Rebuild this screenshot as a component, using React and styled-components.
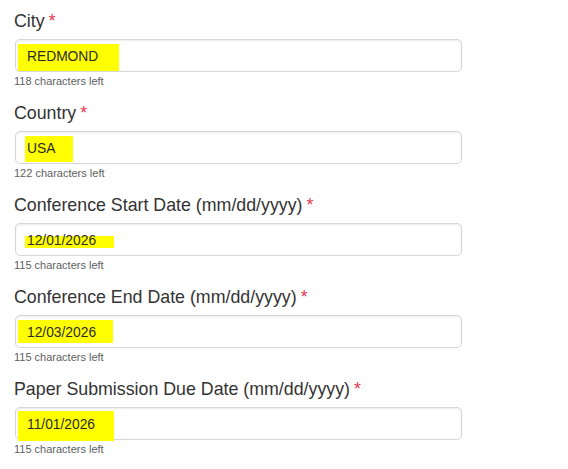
import React from 'react';
import styled, { createGlobalStyle } from 'styled-components';

const GlobalStyle = createGlobalStyle`
  html, body {
    margin: 0;
    padding: 0;
    background: #fff;
  }
  body {
    font-family: 'Liberation Sans', Arial, sans-serif;
    color: #333;
  }
`;

const Form = styled.div`
  padding: 11px 0 0 14px;
  width: 460px;
`;

const Group = styled.div`
  display: flex;
  flex-direction: column;
  margin-bottom: 15px;
`;

const Label = styled.label`
  font-size: 17.8px;
  line-height: 20px;
  color: #333;
  margin-bottom: 8px;
  white-space: nowrap;
`;

const Required = styled.span`
  color: #e63950;
  margin-left: 4px;
`;

const InputBox = styled.div`
  position: relative;
  box-sizing: border-box;
  margin-left: 1px;
  width: 447px;
  height: 33px;
  display: flex;
  align-items: center;
  padding: 0 11px;
  border: 1px solid #d6d6d6;
  border-radius: 5px;
  box-shadow: inset 0 1px 2px rgba(0, 0, 0, 0.08);
  background: #fff;
`;

const Mark = styled.span`
  position: absolute;
  left: ${({ $x }) => $x}px;
  top: ${({ $y }) => $y}px;
  width: ${({ $w }) => $w}px;
  height: ${({ $h }) => $h}px;
  background: #ffff00;
`;

const Value = styled.span`
  position: relative;
  font-size: 13.8px;
  line-height: 15px;
  color: #2b2b2b;
  margin-top: 2px;
`;

const Help = styled.div`
  font-size: 11px;
  line-height: 13px;
  color: #5e5e5e;
  margin-top: 3px;
`;

const fields = [
  { label: 'City', value: 'REDMOND', help: '118 characters left', hl: [2, 4, 101, 27] },
  { label: 'Country', value: 'USA', help: '122 characters left', hl: [9, 4, 48, 26] },
  {
    label: 'Conference Start Date (mm/dd/yyyy)',
    value: '12/01/2026',
    help: '115 characters left',
    hl: [9, 12, 89, 12],
  },
  {
    label: 'Conference End Date (mm/dd/yyyy)',
    value: '12/03/2026',
    help: '115 characters left',
    hl: [2, 4, 95, 23],
  },
  {
    label: 'Paper Submission Due Date (mm/dd/yyyy)',
    value: '11/01/2026',
    help: '115 characters left',
    hl: [2, 3, 96, 30],
  },
];

const Field = ({ label, value, help, hl }) => (
  <Group>
    <Label>
      {label}
      <Required>*</Required>
    </Label>
    <InputBox>
      <Mark $x={hl[0]} $y={hl[1]} $w={hl[2]} $h={hl[3]} />
      <Value>{value}</Value>
    </InputBox>
    <Help>{help}</Help>
  </Group>
);

export default function App() {
  return (
    <>
      <GlobalStyle />
      <Form>
        {fields.map((f) => (
          <Field key={f.label} {...f} />
        ))}
      </Form>
    </>
  );
}
